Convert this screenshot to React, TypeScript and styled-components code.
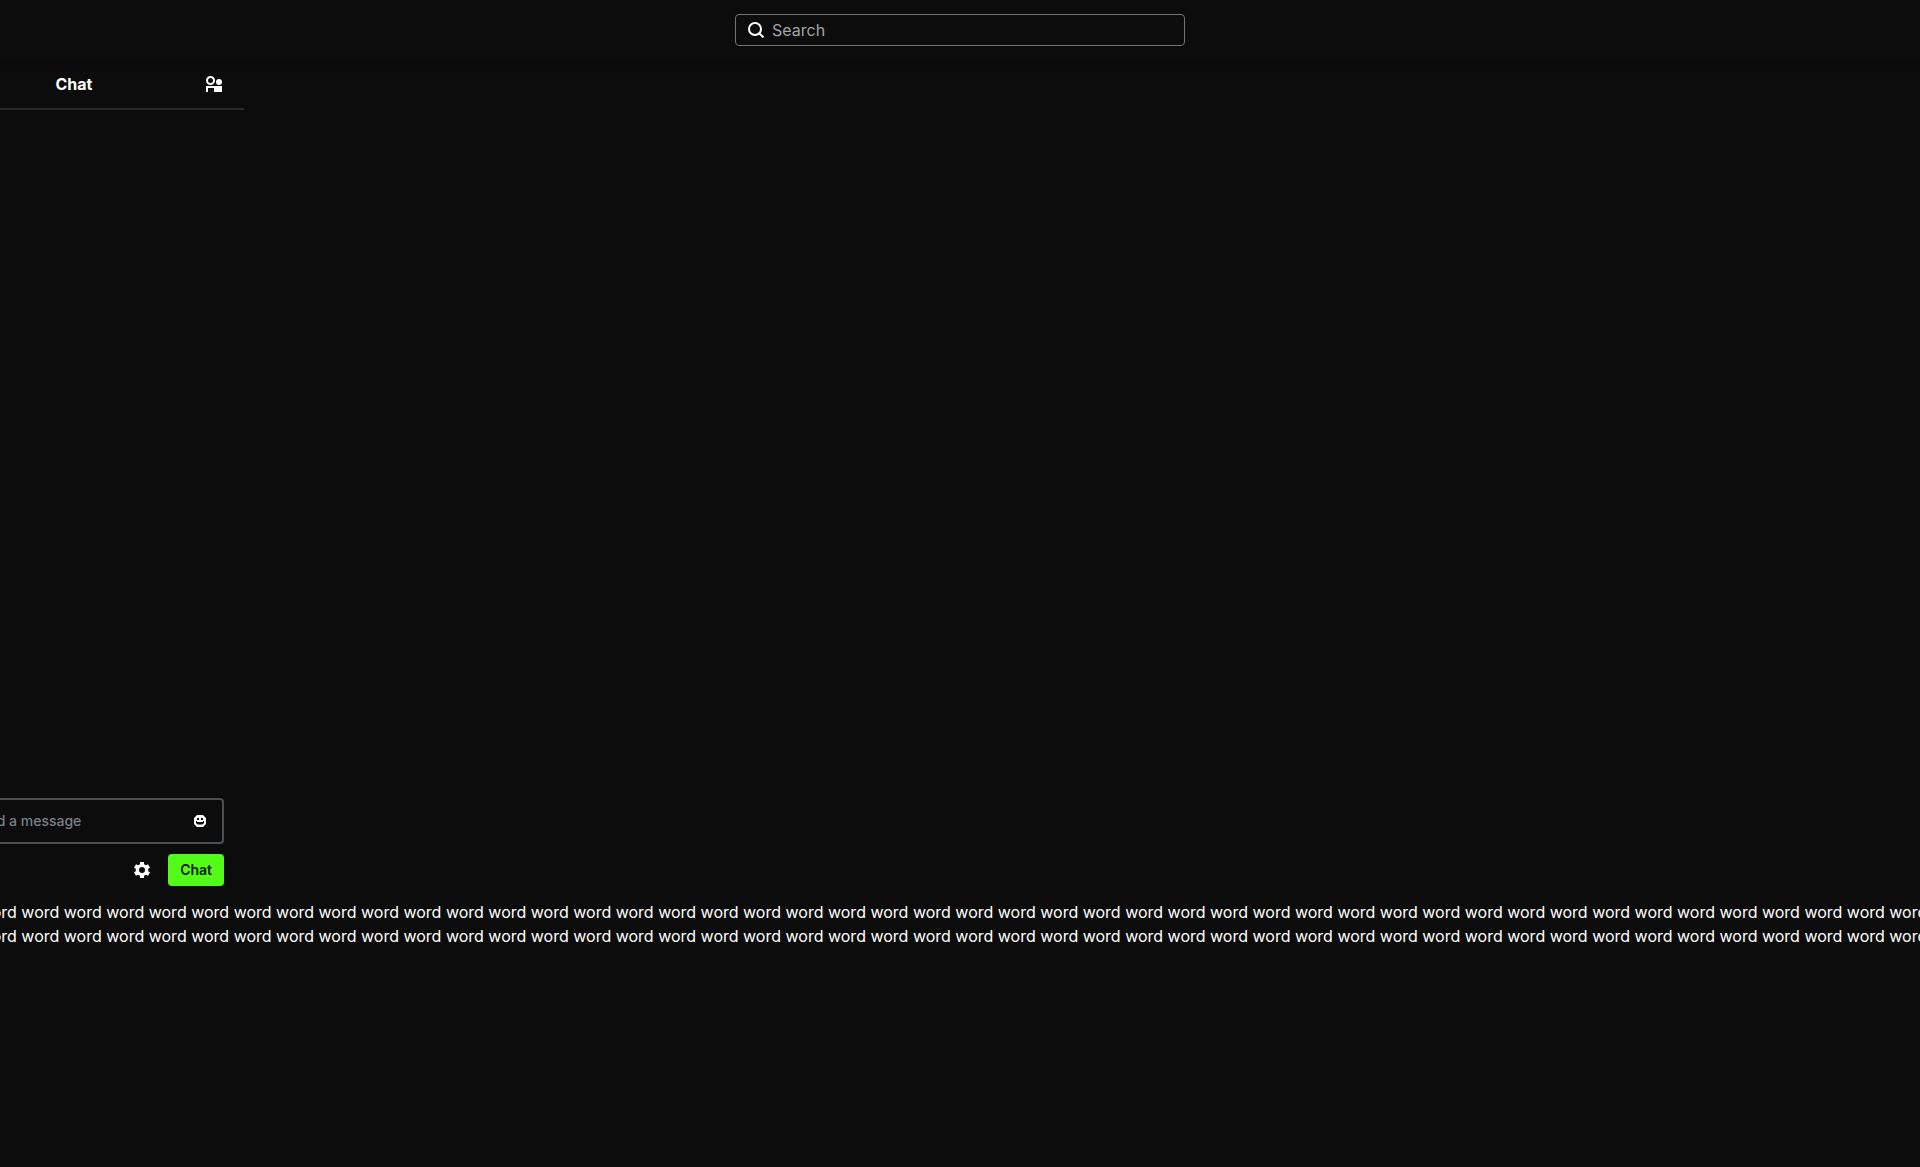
import React from "react";
import styled, { createGlobalStyle } from "styled-components";

const GlobalStyle = createGlobalStyle`
  *, *::before, *::after { box-sizing: border-box; }
  body {
    margin: 0;
    background: #0c0c0c;
    color: #ffffff;
    font-family: Inter, "Liberation Sans", sans-serif;
    font-size: 16px;
    line-height: 24px;
    overflow: hidden;
  }
  button, input { font: inherit; }
`;

const Page = styled.div`
  display: flex;
  flex-direction: column;
  min-height: 100vh;
  overflow: hidden;
`;

const TopBar = styled.header`
  display: flex;
  align-items: center;
  justify-content: center;
  height: 60px;
  box-shadow: 0 2px 4px rgba(0, 0, 0, 0.2);
`;

const SearchBox = styled.label`
  display: flex;
  align-items: center;
  gap: 8px;
  width: 450px;
  height: 32px;
  padding: 0 12px;
  border: 1px solid #737373;
  border-radius: 4px;
`;

const TextField = styled.input<{ $tone: string }>`
  flex: 1;
  min-width: 0;
  padding: 0;
  border: 0;
  outline: 0;
  background: transparent;
  color: #ffffff;
  &::placeholder { color: ${(p) => p.$tone}; opacity: 1; }
`;

const ChatPanel = styled.section`
  display: flex;
  flex-direction: column;
  width: 340px;
  height: calc(100vh - 327px);
  margin-left: -96px;
`;

const PanelHeader = styled.div`
  display: grid;
  grid-template-columns: 1fr auto 1fr;
  align-items: center;
  height: 50px;
  padding: 0 22px;
  border-bottom: 2px solid #2a2a2c;
`;

const PanelTitle = styled.h2`
  grid-column: 2;
  margin: 0;
  font-size: 16px;
  font-weight: 700;
`;

const IconButton = styled.button`
  display: flex;
  justify-self: end;
  padding: 0;
  border: 0;
  background: transparent;
  color: #ffffff;
  cursor: pointer;
`;

const Messages = styled.div`
  flex: 1;
`;

const Composer = styled.form`
  display: flex;
  flex-direction: column;
  gap: 10px;
  padding: 0 20px 14px;
`;

const MessageBox = styled.div`
  display: flex;
  align-items: center;
  height: 46px;
  padding: 0 16px 0 45px;
  border: 2px solid #4c4f51;
  border-radius: 4px;
  font-size: 14px;
  font-weight: 500;
`;

const Actions = styled.div`
  display: flex;
  align-items: center;
  justify-content: flex-end;
  gap: 18px;
`;

const SendButton = styled.button`
  height: 32px;
  padding: 0 12px;
  border: 0;
  border-radius: 4px;
  background: #53fc18;
  color: #0b1a05;
  font-size: 14px;
  font-weight: 600;
  cursor: pointer;
`;

const WordLines = styled.div`
  margin-left: -106px;
  white-space: nowrap;
`;

const WordLine = styled.p`
  margin: 0;
`;

const SearchIcon = () => (
  <svg width="16" height="16" viewBox="0 0 16 16" fill="none" stroke="#fff" strokeWidth="2" aria-hidden="true">
    <circle cx="7" cy="7" r="6" />
    <path d="M11.2 11.2 15.4 15.4" />
  </svg>
);

const UsersIcon = () => (
  <svg width="16" height="16" viewBox="0 0 16 16" fill="currentColor" aria-hidden="true">
    <circle cx="4.5" cy="4.5" r="3.5" fill="none" stroke="currentColor" strokeWidth="2" />
    <circle cx="13" cy="6" r="3" />
    <path d="M0 10H16V16H8V12H2V16H0Z" />
  </svg>
);

const SmileIcon = () => (
  <svg width="12" height="12" viewBox="0 0 12 12" fill="currentColor" aria-hidden="true">
    <path
      fillRule="evenodd"
      d="M3 0H9L12 3V9L9 12H3L0 9V3ZM3 3V5H5V3ZM7 3V5H9V3ZM2 6V8L3.5 9.5H8.5L10 8V6H9V7H3V6Z"
    />
  </svg>
);

const GearIcon = () => (
  <svg width="16" height="16" viewBox="0 0 16 16" fill="currentColor" aria-hidden="true">
    <path
      fillRule="evenodd"
      d="M6 0H10V2.2L12 3.3L14 2.2L16 5.7L14.2 6.8V9.2L16 10.3L14 13.8L12 12.7L10 13.8V16H6V13.8L4 12.7L2 13.8L0 10.3L1.8 9.2V6.8L0 5.7L2 2.2L4 3.3L6 2.2ZM8 5A3 3 0 1 0 8 11A3 3 0 1 0 8 5Z"
    />
  </svg>
);

const line = Array(60).fill("word").join(" ");

export default function App() {
  return (
    <Page>
      <GlobalStyle />
      <TopBar>
        <SearchBox>
          <SearchIcon />
          <TextField type="text" placeholder="Search" aria-label="Search" $tone="#a0a4a6" />
        </SearchBox>
      </TopBar>
      <main>
        <ChatPanel>
          <PanelHeader>
            <PanelTitle>Chat</PanelTitle>
            <IconButton type="button" aria-label="Community">
              <UsersIcon />
            </IconButton>
          </PanelHeader>
          <Messages />
          <Composer onSubmit={(e) => e.preventDefault()}>
            <MessageBox>
              <TextField type="text" placeholder="Send a message" aria-label="Send a message" $tone="#7b8185" />
              <IconButton type="button" aria-label="Emotes">
                <SmileIcon />
              </IconButton>
            </MessageBox>
            <Actions>
              <IconButton type="button" aria-label="Chat settings">
                <GearIcon />
              </IconButton>
              <SendButton type="submit">Chat</SendButton>
            </Actions>
          </Composer>
        </ChatPanel>
        <WordLines>
          <WordLine>{line}</WordLine>
          <WordLine>{line}</WordLine>
        </WordLines>
      </main>
    </Page>
  );
}
